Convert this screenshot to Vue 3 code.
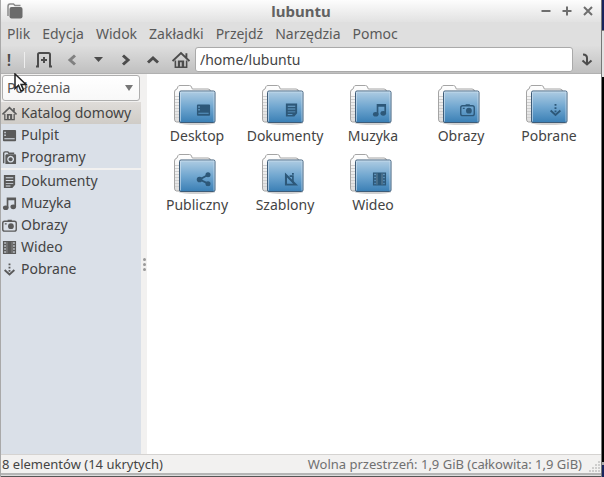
<script setup>
import { ref } from 'vue'

const menus = ['Plik', 'Edycja', 'Widok', 'Zakładki', 'Przejdź', 'Narzędzia', 'Pomoc']
const path = ref('/home/lubuntu')
const view = ref('places')

const groups = [
  [
    { label: 'Katalog domowy', icon: 'home', active: true },
    { label: 'Pulpit', icon: 'desktop' },
    { label: 'Programy', icon: 'apps' },
  ],
  [
    { label: 'Dokumenty', icon: 'document' },
    { label: 'Muzyka', icon: 'music' },
    { label: 'Obrazy', icon: 'camera' },
    { label: 'Wideo', icon: 'film' },
    { label: 'Pobrane', icon: 'download' },
  ],
]

const folders = [
  { label: 'Desktop', icon: 'desktop' },
  { label: 'Dokumenty', icon: 'document' },
  { label: 'Muzyka', icon: 'music' },
  { label: 'Obrazy', icon: 'camera' },
  { label: 'Pobrane', icon: 'download' },
  { label: 'Publiczny', icon: 'share' },
  { label: 'Szablony', icon: 'template' },
  { label: 'Wideo', icon: 'film' },
]
</script>

<template>
  <svg class="defs" aria-hidden="true">
    <defs>
      <linearGradient id="blue" x1="0" y1="0" x2="0" y2="1">
        <stop offset="0" stop-color="#b0cde3" />
        <stop offset="0.5" stop-color="#71a7d0" />
        <stop offset="1" stop-color="#3a7fb5" />
      </linearGradient>
      <linearGradient id="paper" x1="0" y1="0" x2="0" y2="1">
        <stop offset="0" stop-color="#fff" />
        <stop offset="1" stop-color="#ddd" />
      </linearGradient>
    </defs>
    <symbol id="home" viewBox="0 0 16 16">
      <path d="M.5 9 8 1.800 15.500 9M12.800 2v4" fill="none" stroke="currentColor" stroke-width="1.700" />
      <path d="M3 8.500V14.500h10V8.500" fill="none" stroke="currentColor" stroke-width="1.400" />
      <path d="M5.200 8.500h2v6h-2zM8.600 8.500h2.200v6H8.600zM5.200 8.500h5.600v1.500H5.200z" fill="currentColor" />
    </symbol>
    <symbol id="desktop" viewBox="0 0 16 16">
      <path fill-rule="evenodd" d="M2 2h12q1 0 1 1v10q0 1-1 1H2q-1 0-1-1V3q0-1 1-1zM2.500 4v1.500H4V4zm0 3v1.500H4V7zm0 4v1h11v-1z" fill="currentColor" />
    </symbol>
    <symbol id="apps" viewBox="0 0 16 16">
      <path d="M1.800 14V3.500q0-1.500 1.500-1.500h3l1 1.500H13" fill="none" stroke="currentColor" stroke-width="1.500" />
      <path fill-rule="evenodd" d="M4.500 4.500H14a1 1 0 0 1 1 1V14a1 1 0 0 1-1 1H3.600V5.500zM9.200 6.200a3.600 3.600 0 1 0 .01 0zm0 1.400a2.200 2.200 0 1 1-.01 0z" fill="currentColor" />
      <circle cx="9.200" cy="9.800" r="1.100" fill="currentColor" />
    </symbol>
    <symbol id="document" viewBox="0 0 16 16">
      <path fill-rule="evenodd" d="M2 1h12v10.500L11 15H2zM4 3.500v1h8v-1zm0 3v1h8v-1zm0 3v1h8v-1zm0 2.800v1h5v-1z" fill="currentColor" />
    </symbol>
    <symbol id="music" viewBox="0 0 16 16">
      <path d="M5 1.500h10v10h-1.800v-7H6.800v8H5z" fill="currentColor" />
      <ellipse cx="4" cy="12.500" rx="3" ry="2.500" fill="currentColor" />
      <ellipse cx="12" cy="11.500" rx="3" ry="2.500" fill="currentColor" />
    </symbol>
    <symbol id="camera" viewBox="0 0 16 16">
      <rect x=".8" y="3.500" width="14.400" height="10.500" rx="2" fill="none" stroke="currentColor" stroke-width="1.500" />
      <path d="M6 3.500V1.800h4.500v1.700M3 5.500h2V7H3z" fill="currentColor" />
      <circle cx="9.500" cy="8.700" r="3.100" fill="currentColor" />
    </symbol>
    <symbol id="film" viewBox="0 0 16 16">
      <path fill-rule="evenodd" d="M1 1h14v14H1zM2.500 2.500v1.500H4V2.500zm0 3.200v1.500H4V5.700zm0 3.200v1.500H4V8.900zm0 3.200v1.500H4v-1.500zM12 2.500v1.500h1.500V2.500zm0 3.200v1.500h1.500V5.700zm0 3.200v1.500h1.500V8.900zm0 3.200v1.500h1.500v-1.500z" fill="currentColor" />
      <path d="M5.300 2v12M10.700 2v12" stroke="#fff" stroke-width=".6" opacity=".5" />
    </symbol>
    <symbol id="download" viewBox="0 0 16 16">
      <path d="M7 1.500h2v2H7zM7 5h2v2H7zM7 8.500h2v2H7z" fill="currentColor" />
      <path d="m2.800 8.500 5.200 4.700 5.200-4.700" fill="none" stroke="currentColor" stroke-width="2" />
    </symbol>
    <symbol id="share" viewBox="0 0 16 16">
      <path d="M13 3.500 4 8.500l9 4.500" fill="none" stroke="currentColor" stroke-width="2" />
      <circle cx="12.800" cy="3.500" r="2.700" fill="currentColor" />
      <circle cx="3.800" cy="8.500" r="3" fill="currentColor" />
      <circle cx="12.800" cy="13" r="2.700" fill="currentColor" />
    </symbol>
    <symbol id="template" viewBox="0 0 16 16">
      <path fill-rule="evenodd" d="M1 1l14 14H1zM3.200 6.500V13h6.500z" fill="currentColor" />
      <path d="M6 5h3.500v7M8.500 2.500h2" fill="none" stroke="currentColor" stroke-width="1.800" />
    </symbol>
  </svg>

  <div class="screen">
    <div class="window">
      <header class="titlebar">
        <svg class="app-icon" viewBox="0 0 16 16">
          <path d="M1 13V3.500Q1 1 3 1h3.500L8 2.500h5.500" fill="none" stroke="#8a8a8a" stroke-width="1.500" />
          <rect x="2.500" y="4" width="13" height="11.500" rx="2" fill="#6b6b6b" />
        </svg>
        <h1>lubuntu</h1>
        <div class="controls">
          <button aria-label="Minimalizuj"><svg viewBox="0 0 10 10"><path d="M.5 5h9" /></svg></button>
          <button aria-label="Maksymalizuj"><svg viewBox="0 0 10 10"><path d="M.5 5h9M5 .5v9" /></svg></button>
          <button aria-label="Zamknij"><svg viewBox="0 0 10 10"><path d="m1 1 8 8M9 1 1 9" /></svg></button>
        </div>
      </header>

      <nav class="menubar">
        <button v-for="m in menus" :key="m">{{ m }}</button>
      </nav>

      <div class="toolbar">
        <span class="alert">!</span>
        <span class="divider"></span>
        <button class="tab" aria-label="Nowa karta">
          <svg viewBox="0 0 18 18"><path d="M1 15.500h2V3.500Q3 2 4.500 2h9Q15 2 15 3.500v12h2M9 6v6M6 9h6" /></svg>
        </button>
        <button class="dim" aria-label="Wstecz"><svg viewBox="0 0 18 18"><path d="m11 4.500-5 4.500 5 4.500" /></svg></button>
        <button class="history" aria-label="Historia"><svg viewBox="0 0 18 18"><path class="solid" d="M4 6h9l-4.500 5z" /></svg></button>
        <button class="bold" aria-label="Dalej"><svg viewBox="0 0 18 18"><path d="m7 4.500 5 4.500-5 4.500" /></svg></button>
        <button class="bold" aria-label="W górę"><svg viewBox="0 0 18 18"><path d="m4 11.500 5-4.500 5 4.500" /></svg></button>
        <button aria-label="Katalog domowy"><svg class="plain"><use href="#home" /></svg></button>
        <input v-model="path" aria-label="Ścieżka" type="text" />
        <button class="go" aria-label="Przejdź">
          <svg viewBox="0 0 18 18"><path d="M5 3.500q4 0 4 3.500v6M4.500 9.500 9 13.500l4.500-4" /></svg>
        </button>
      </div>

      <main class="content">
        <aside class="sidebar">
          <div class="picker">
            <select v-model="view" aria-label="Panel boczny">
              <option value="places">Położenia</option>
            </select>
            <svg viewBox="0 0 8 6"><path d="M0 0h8L4 6z" /></svg>
          </div>
          <ul v-for="(group, i) in groups" :key="i">
            <li v-for="p in group" :key="p.label">
              <a href="#" :class="{ active: p.active }">
                <svg><use :href="'#' + p.icon" /></svg>{{ p.label }}
              </a>
            </li>
          </ul>
        </aside>
        <div class="splitter"><i></i><i></i><i></i></div>
        <section class="files">
          <a v-for="f in folders" :key="f.label" href="#" class="file">
            <svg class="folder" viewBox="0 0 48 42">
              <ellipse cx="24" cy="39" rx="18" ry="2" fill="#000" opacity=".18" />
              <path d="M1.500 35V8q0-2.500 2.500-3l1-2.500Q5.500 1.500 7 1.500h9.500q1.500 0 2 1.500l.8 2H35q2.500 0 2.500 2.500V36q0 2-2 2h-32q-2 0-2-3z" fill="url(#paper)" stroke="#a4a4a4" />
              <path d="M2 12.500h4M2 15.500h4M2 18.500h4M2 21.500h4M2 24.500h4M2 27.500h4M2 30.500h4M2 33.500h4" stroke="#d0d0d0" />
              <rect x="6.500" y="7" width="35.500" height="31.500" rx="1.500" fill="url(#blue)" stroke="#3e5c78" />
              <path d="M7.500 37.500V8h33.500v29.500" fill="none" stroke="#d5e5f1" opacity=".6" />
              <use :href="'#' + f.icon" x="23" y="18.500" width="15" height="15" color="#2d5879" />
            </svg>
            <span>{{ f.label }}</span>
          </a>
        </section>
      </main>

      <footer class="status">
        <span>8 elementów (14 ukrytych)</span>
        <span class="space">Wolna przestrzeń: 1,9 GiB (całkowita: 1,9 GiB)</span>
        <svg class="grip" viewBox="0 0 12 12">
          <path d="M9 1h2M6 4h2M9 4h2M3 7h2M6 7h2M9 7h2M0 10h2M3 10h2M6 10h2M9 10h2" />
        </svg>
      </footer>
      <div class="below"></div>
    </div>
    <div class="behind">
      <i class="navy"></i><i class="pale"></i><i class="black"></i><i class="thin"></i><i class="foot"></i>
    </div>
    <svg class="pointer" viewBox="0 0 14 20">
      <path d="M1 1v14.500l3.500-3.200 2.400 5.700 2.600-1.100-2.400-5.500H12z" />
    </svg>
  </div>
</template>

<style>
body {
  margin: 0;
}
</style>

<style scoped>
.defs {
  position: absolute;
  width: 0;
  height: 0;
}
.screen {
  position: relative;
  display: grid;
  grid-template-columns: 1fr 2px;
  min-height: 100vh;
  font: 14px/20px "Noto Sans", sans-serif;
  color: #444;
}
button {
  display: flex;
  align-items: center;
  justify-content: center;
  padding: 0;
  border: 0;
  background: none;
  font: inherit;
  color: inherit;
}
a {
  color: inherit;
  text-decoration: none;
}
.window {
  display: flex;
  flex-direction: column;
  min-width: 0;
  border-left: 1px solid #a9a9a9;
  border-right: 1px solid #777;
  background: #f2f1f0;
}
.titlebar {
  display: grid;
  grid-template-columns: 56px 1fr 56px;
  align-items: center;
  height: 22px;
  padding: 0 4px;
  background: linear-gradient(#fdfdfd, #e2e2e2);
}
.app-icon {
  width: 16px;
  height: 16px;
  margin-left: 2px;
}
h1 {
  margin: 0;
  font-size: 15px;
  text-align: center;
  color: #626262;
}
.controls {
  display: flex;
  gap: 11px;
}
.controls svg {
  width: 10px;
  height: 10px;
  fill: none;
  stroke: #6e6e6e;
  stroke-width: 2;
}
.menubar {
  display: flex;
  gap: 12px;
  height: 24px;
  padding: 0 6px;
  background: #dfdfdf;
  color: #5a5a5a;
}
.toolbar {
  display: flex;
  align-items: center;
  height: 27px;
  border-bottom: 1px solid #b1b1b1;
  background: linear-gradient(#dedede, #c0c0c0);
  color: #4c4c4c;
}
.toolbar button {
  flex: none;
  width: 28px;
}
.toolbar svg {
  width: 18px;
  height: 18px;
  fill: none;
  stroke: currentColor;
  stroke-width: 2;
}
.toolbar .plain {
  stroke: none;
}
.toolbar .solid {
  fill: currentColor;
  stroke: none;
}
.toolbar .bold svg {
  stroke-width: 3;
}
.toolbar .dim {
  color: #808080;
}
.toolbar .dim svg {
  stroke-width: 3;
}
.toolbar .tab {
  width: 30px;
  margin-left: 4px;
}
.toolbar .history {
  width: 24px;
}
.alert {
  width: 16px;
  text-align: center;
  font-size: 16px;
  font-weight: 600;
}
.divider {
  width: 1px;
  height: 16px;
  margin-left: 7px;
  background: #eee;
}
.toolbar input {
  box-sizing: border-box;
  flex: 1;
  min-width: 0;
  height: 25px;
  padding: 0 4px;
  border: 1px solid #aaa;
  border-radius: 3px;
  background: #fff;
  font: inherit;
  color: #444;
}
.content {
  display: flex;
  flex: 1;
}
.sidebar {
  flex: none;
  width: 140px;
  background: #dae0e8;
}
.picker {
  display: grid;
  align-items: center;
  padding: 1px;
  background: #f2f1f0;
}
.picker > * {
  grid-area: 1 / 1;
}
.picker select {
  appearance: none;
  width: 100%;
  height: 26px;
  padding: 0 4px;
  border: 1px solid #aeaeae;
  border-radius: 3px;
  background: linear-gradient(#fff, #f8f8f8);
  font: inherit;
  color: #555;
}
.picker svg {
  justify-self: end;
  width: 8px;
  height: 6px;
  margin-right: 7px;
  fill: #777;
  pointer-events: none;
}
ul {
  margin: 0;
  padding: 0;
  list-style: none;
}
ul + ul {
  border-top: 2px solid #f2f1f0;
}
li a {
  display: flex;
  align-items: center;
  gap: 4px;
  height: 22px;
  padding-left: 1px;
  white-space: nowrap;
}
li a.active {
  background: linear-gradient(#dfdcd9, #cfccc7);
}
li svg {
  flex: none;
  width: 15px;
  height: 15px;
  color: #5a5a5a;
}
.splitter {
  display: flex;
  flex: none;
  flex-direction: column;
  align-items: center;
  justify-content: center;
  gap: 2px;
  width: 6px;
}
.splitter i {
  width: 3px;
  height: 3px;
  border-radius: 50%;
  background: #999;
}
.files {
  display: grid;
  flex: 1;
  grid-template-columns: repeat(auto-fill, 88px);
  grid-auto-rows: 69px;
  align-content: start;
  padding: 10px 0 0 6px;
  background: #fff;
}
.file {
  display: flex;
  flex-direction: column;
  align-items: center;
}
.folder {
  width: 48px;
  height: 42px;
}
.status {
  display: flex;
  align-items: center;
  height: 18px;
  padding-left: 1px;
  border-top: 1px solid #d5d3d1;
  font-size: 13px;
  white-space: nowrap;
}
.space {
  margin-left: auto;
  color: #707070;
}
.grip {
  align-self: flex-end;
  width: 12px;
  height: 12px;
  margin-left: 7px;
  stroke: #aaa;
}
.below {
  height: 1px;
  border-top: 2px solid #b5b5b5;
  border-bottom: 1px solid #555;
  background: #ddd;
}
.behind {
  display: grid;
  grid-template-rows: 30px 47px 1fr 3px 12px;
}
.navy,
.foot {
  background: #17235c;
}
.pale {
  border-top: 1px solid #777;
  background: #e3e3e3;
}
.black {
  background: #000;
}
.thin {
  background: #aaa;
}
.pointer {
  position: absolute;
  top: 73px;
  left: 14px;
  width: 14px;
  height: 20px;
  fill: #fff;
  stroke: #222;
  stroke-width: 1.500;
}
</style>
